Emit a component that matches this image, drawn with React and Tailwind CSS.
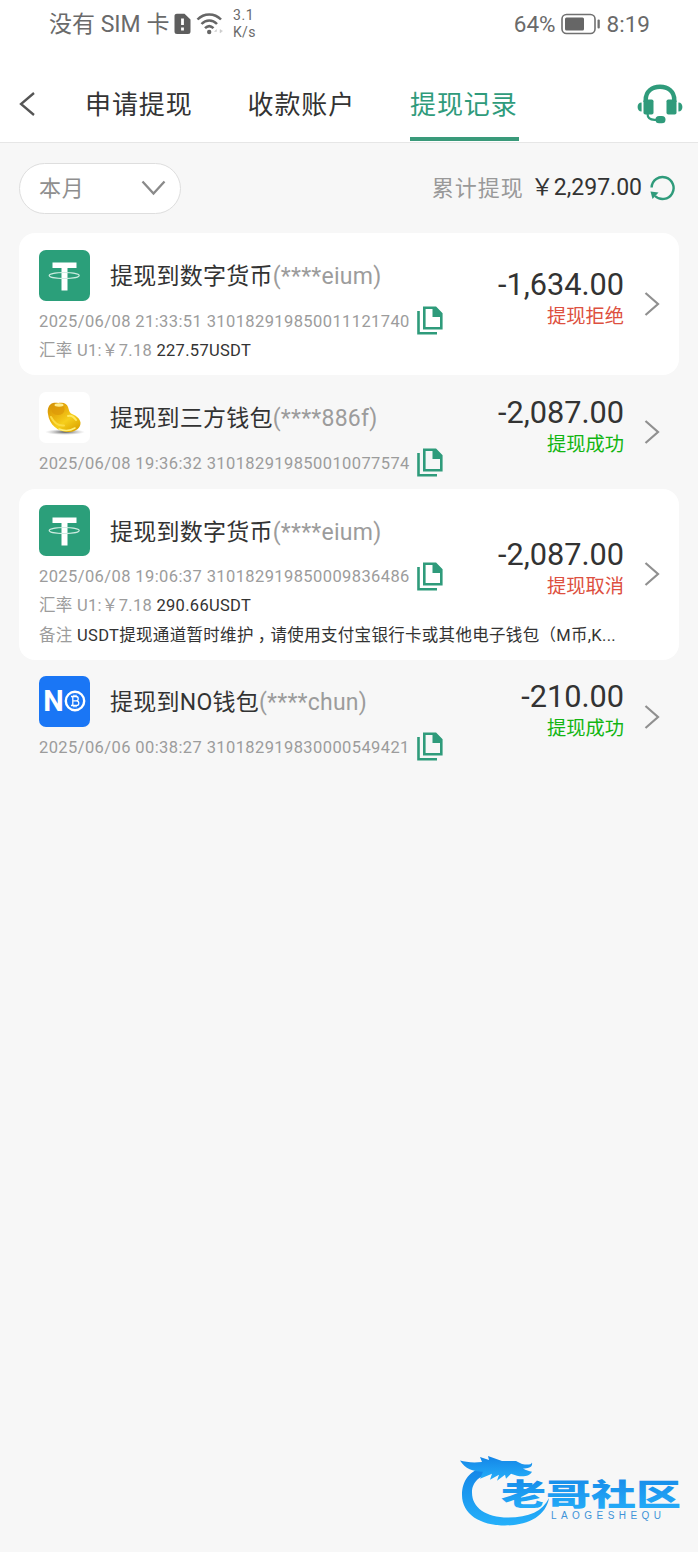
import clsx from "clsx";

const TABS = [
  { key: "apply", label: "申请提现" },
  { key: "account", label: "收款账户" },
  { key: "records", label: "提现记录", active: true },
];

const STATUS = {
  rejected: { label: "提现拒绝", color: "text-[#dd5040]" },
  success: { label: "提现成功", color: "text-[#12b512]" },
  canceled: { label: "提现取消", color: "text-[#dd5040]" },
};

const RECORDS = [
  {
    id: "310182919850011121740",
    icon: "usdt",
    title: "提现到数字货币",
    account: "(****eium)",
    time: "2025/06/08 21:33:51",
    amount: "-1,634.00",
    status: "rejected",
    rate: "227.57USDT",
    height: "h-[142px]",
  },
  {
    id: "310182919850010077574",
    icon: "gold",
    title: "提现到三方钱包",
    account: "(****886f)",
    time: "2025/06/08 19:36:32",
    amount: "-2,087.00",
    status: "success",
    height: "h-[113.700px]",
  },
  {
    id: "310182919850009836486",
    icon: "usdt",
    title: "提现到数字货币",
    account: "(****eium)",
    time: "2025/06/08 19:06:37",
    amount: "-2,087.00",
    status: "canceled",
    rate: "290.66USDT",
    remark: true,
    height: "h-[170.500px]",
  },
  {
    id: "310182919830000549421",
    icon: "no",
    title: "提现到NO钱包",
    account: "(****chun)",
    time: "2025/06/06 00:38:27",
    amount: "-210.00",
    status: "success",
    height: "h-[114px]",
  },
];

function StatusBar() {
  return (
    <div className="flex h-12 items-center justify-between pl-[49px] pr-[48px] text-[#6a6a6a]">
      <div className="flex items-center">
        <span className="w-[125px] whitespace-nowrap pt-px text-[23px] leading-none">没有 SIM 卡</span>
        <svg className="h-[22px] w-[17px]" viewBox="0 0 17 22">
          <path d="M3 .8h7.500l6 5.700v12a2.500 2.500 0 0 1-2.500 2.500H3a2.500 2.500 0 0 1-2.500-2.500v-15A2.500 2.500 0 0 1 3 .8z" fill="#5e5e5e" />
          <path d="M8.500 5.500v6.500M8.500 14.500v3" stroke="#fff" strokeWidth="2.800" />
        </svg>
        <svg className="ml-[5px] h-[24px] w-[28px]" viewBox="0 0 28 24" fill="none" stroke="#666" strokeWidth="2.500">
          <path d="M1.500 7.500C8 .7 18.500 .7 25 7.500" />
          <path d="M5.500 12C10 7.300 16.500 7.300 21 12" />
          <path d="M9 16.200c2.700-2.700 5.800-2.700 8.500 0" />
          <circle cx="13.200" cy="20" r="2.200" fill="#666" stroke="none" />
          <path d="M20.500 17.500l-2 2h2zM24 17.500v3.500l2.500-2z" fill="#ccc" stroke="#ccc" strokeWidth=".5" />
        </svg>
        <div className="ml-[9px] text-[14px] leading-[17.500px]">
          <div className="tracking-[0.6px]">3.1</div>
          <div className="tracking-[0.3px]">K/s</div>
        </div>
      </div>
      <div className="flex items-center text-[22.500px] leading-none">
        <span>64%</span>
        <svg className="ml-[5px] h-[22px] w-[40px]" viewBox="0 0 40 22">
          <rect x="1" y="1.500" width="33" height="19" rx="4.500" fill="none" stroke="#707070" strokeWidth="1.600" />
          <rect x="4" y="4.500" width="19" height="13" rx="1.500" fill="#666" />
          <rect x="36.500" y="6.500" width="2.300" height="9" rx="1" fill="#707070" />
        </svg>
        <span className="ml-[6px]">8:19</span>
      </div>
    </div>
  );
}

function HeadsetIcon() {
  return (
    <svg className="h-[40px] w-[46px]" viewBox="0 0 46 40" fill="#2f9b7b">
      <path d="M8.700 18v-2C8.700 7.200 15 2.800 23 2.800S37.300 7.200 37.300 16v2" fill="none" stroke="#2f9b7b" strokeWidth="4.400" />
      <rect x="6.500" y="15.500" width="10" height="15" rx="1.800" />
      <rect x="29.500" y="15.500" width="10" height="15" rx="1.800" />
      <path d="M4.600 18.500v9C2 27.500.6 25.500.6 23s1.400-4.500 4-4.500zM41.400 18.500v9c2.600 0 4-2 4-4.500s-1.400-4.500-4-4.500z" />
      <path d="M10.500 29.500c0 4.500 2 6.300 7 6.300h3" fill="none" stroke="#2f9b7b" strokeWidth="2.200" />
      <rect x="18.500" y="32" width="10" height="7.300" rx="3.600" />
    </svg>
  );
}

function Header() {
  return (
    <header className="h-[143px] border-b border-[#e6e6e6] bg-white">
      <StatusBar />
      <nav className="flex h-[94px] items-start pl-[18px]">
        <svg className="mt-[43px] h-[26px] w-[18px]" viewBox="0 0 18 26" fill="none" stroke="#555" strokeWidth="2.300">
          <path d="M16 2L3 13l13 11" />
        </svg>
        <div className="ml-[49px] flex gap-[54px]">
          {TABS.map((tab) => (
            <div
              key={tab.key}
              className={clsx(
                "flex h-[93px] w-[108.500px] flex-col justify-between whitespace-nowrap text-[26px] tracking-[0.9px]",
                tab.active ? "text-[#2f9b7b]" : "text-[#333]"
              )}
            >
              <span className="mt-[37px] leading-[40px]">{tab.label}</span>
              {tab.active && <span className="h-[4px] bg-[#3a9a7a]" />}
            </div>
          ))}
        </div>
        <div className="ml-auto mr-[15px] mt-[36px]">
          <HeadsetIcon />
        </div>
      </nav>
    </header>
  );
}

function FilterBar() {
  return (
    <div className="flex h-[90.400px] items-center justify-between pl-[19px] pr-[22px]">
      <button className="flex h-[51px] w-[162px] items-center justify-between rounded-full border border-[#dedede] bg-white pl-[19px] pr-[14px] text-[22px] tracking-[0.8px] text-[#8f8f8f]">
        本月
        <svg className="h-[16px] w-[25px]" viewBox="0 0 25 16" fill="none" stroke="#8a8a8a" strokeWidth="2.300">
          <path d="M1.500 1.500l11 12 11-12" />
        </svg>
      </button>
      <div className="flex items-center text-[22px]">
        <span className="pt-px tracking-[1px] text-[#999]">累计提现</span>
        <span className="ml-[7px] pt-px text-[23px] text-[#333]">￥2,297.00</span>
        <svg className="ml-[7px] h-[27px] w-[27px]" viewBox="0 0 27 27" fill="none" stroke="#2f9b7b" strokeWidth="2.400">
          <path d="M2.600 12.500A11 11 0 1 1 6 21" />
          <path d="M1.500 16.500l8 1-6 6.500z" fill="#2f9b7b" stroke="none" />
        </svg>
      </div>
    </div>
  );
}

function UsdtIcon() {
  return (
    <svg className="h-[51px] w-[51px] shrink-0" viewBox="0 0 51 51">
      <rect width="51" height="51" rx="7" fill="#2b9f7a" />
      <path d="M13.500 12.500h24v5.500h-9v22.500h-6V18h-9z" fill="#fff" />
      <ellipse cx="25.200" cy="25.500" rx="15" ry="3" fill="none" stroke="#cdebe0" strokeWidth="1.200" />
    </svg>
  );
}

function GoldIcon() {
  return (
    <svg className="h-[51px] w-[51px] shrink-0" viewBox="0 0 51 51">
      <defs>
        <linearGradient id="gold" x1="0" y1="0" x2=".8" y2="1">
          <stop offset="0" stopColor="#d08f06" />
          <stop offset=".35" stopColor="#e8ac0c" />
          <stop offset=".65" stopColor="#f6cf1c" />
          <stop offset="1" stopColor="#dca400" />
        </linearGradient>
        <radialGradient id="goldShade">
          <stop offset="0" stopColor="#333" stopOpacity=".85" />
          <stop offset="1" stopColor="#999" stopOpacity="0" />
        </radialGradient>
      </defs>
      <rect width="51" height="51" rx="7" fill="#fff" />
      <ellipse cx="26" cy="40" rx="20" ry="3" fill="url(#goldShade)" />
      <path d="M9 22c-1-5 1-10 5-11 3-.8 4 .3 7-.2 4-.7 7 1 8 4.200 1 3 1 5 3 6.500 4 1.500 9 4.500 9.500 9 .4 5-4 9-11 9.500C20 40.500 10 33 9 22z" fill="url(#gold)" />
      <ellipse cx="19" cy="17.500" rx="6.500" ry="5.500" fill="#dd9808" fillOpacity=".7" />
      <ellipse cx="20" cy="13" rx="4.500" ry="1.700" fill="#ffec8a" />
      <path d="M12 25c3 6 8 9 13 8.500" fill="none" stroke="#fbdc45" strokeWidth="2" strokeLinecap="round" />
      <path d="M29 24c3-1 6 1 8 4" fill="none" stroke="#ffe863" strokeWidth="2" strokeLinecap="round" />
      <path d="M20 37c5 2 11 2 16-1" fill="none" stroke="#fff07a" strokeWidth="1.500" strokeLinecap="round" />
    </svg>
  );
}

function NoIcon() {
  return (
    <div className="flex h-[51px] w-[51px] shrink-0 items-center justify-center rounded-[7px] bg-[#1a76f5] text-white">
      <span className="text-[29px] font-bold leading-none">N</span>
      <svg className="h-[22px] w-[22px] shrink-0" viewBox="0 0 22 22" fill="none" stroke="#fff">
        <circle cx="11" cy="11" r="9.200" strokeWidth="2.400" />
        <path d="M7 6.500h5a2.200 2.200 0 0 1 0 4.400H8.500h4a2.300 2.300 0 0 1 0 4.600H7M8.800 6.500v9M10 4.800v1.700M12 4.800v1.700M10 15.500v1.700M12 15.500v1.700" strokeWidth="1.300" />
      </svg>
    </div>
  );
}

const ICONS = { usdt: UsdtIcon, gold: GoldIcon, no: NoIcon };

function CopyIcon() {
  return (
    <svg className="ml-[7px] h-[29px] w-[26px] shrink-0" viewBox="0 0 26 29" fill="none" stroke="#2f9b7b">
      <path d="M1.500 5v22.200h18.500" strokeWidth="2.600" />
      <path d="M7.300 1.800h11.200l5.800 6v14.500h-17z" strokeWidth="2.600" />
      <path d="M15.500 1.500h3.500l6 6.200V11h-9.500z" fill="#2f9b7b" stroke="none" />
    </svg>
  );
}

function RecordItem({ record, striped }) {
  const Icon = ICONS[record.icon];
  const status = STATUS[record.status];

  return (
    <li className={clsx("flex items-center justify-between rounded-[16px] px-[20px]", record.height, striped && "bg-white")}>
      <div className="h-full w-[410px] shrink-0 whitespace-nowrap pt-[16.300px] text-[16.500px] leading-[29px] text-[#9c9c9c]">
        <div className="flex h-[51px] items-center">
          <Icon />
          <p className="ml-[20px] pt-[3px] text-[23px] tracking-[0.250px]">
            <span className="text-[#333]">{record.title}</span>
            <span>{record.account}</span>
          </p>
        </div>
        <div className="mt-[5.400px] flex h-[29px] items-center">
          <span className="pt-px tracking-[0.4px]">
            {record.time} {record.id}
          </span>
          <CopyIcon />
        </div>
        {record.rate && (
          <p className="h-[29px] pt-[0.500px]">
            <span className="tracking-[0.3px]">汇率 U1:￥7.18 </span>
            <span className="tracking-[0.3px] text-[#333]">{record.rate}</span>
          </p>
        )}
        {record.remark && (
          <p className="h-[29px] pt-px tracking-[0.310px]">
            备注{" "}
            <span className="text-[#333]">
              USDT提现通道暂时维护<span className="-mr-[4px] pl-[4px]">，</span>请使用支付宝银行卡或其他电子钱包（M币,K...
            </span>
          </p>
        )}
      </div>
      <div className="flex items-center">
        <div className="pb-[9px] text-right">
          <p className="pb-px text-[30.700px] leading-[33px] text-[#333]">{record.amount}</p>
          <p className={clsx("text-[19.250px] leading-[30px]", status.color)}>{status.label}</p>
        </div>
        <svg className="ml-[20px] -mr-px h-[26px] w-[16px]" viewBox="0 0 16 26" fill="none" stroke="#909090" strokeWidth="2.200">
          <path d="M1.500 2l12.500 11-12.500 11" />
        </svg>
      </div>
    </li>
  );
}

function CommunityLogo() {
  return (
    <svg className="h-[80px] w-[226px]" viewBox="0 0 226 80">
      <defs>
        <linearGradient id="brand" x1="0" y1="0" x2="0" y2="1">
          <stop offset="0" stopColor="#1484e6" />
          <stop offset="1" stopColor="#25b0fa" />
        </linearGradient>
      </defs>
      <g fill="url(#brand)">
        <path d="M30 14C12 18 5 29 5 43c0 19 18 30.500 43 30.500 23 0 41-9.500 44-27.500-6 13-20 19.500-41 19.500-22 0-36-10-36-25 0-10 7-18 25-21.500z" />
        <path d="M3 8.500c6 1.500 12 2.500 22 1.500l-2-5 9 3-1-4 14 5 14 0 6 3c5 1 9 1 10-1.500 1 5-4 6-9 6 3 2 6 2.500 9 3.200-2 4-8 5.500-15 4l-6-2-5 5-1-4-8 6 2-6-9 5 2-6-12 5 3-7c-10 0-18-3-23-11.200z" />
      </g>
      <text x="44" y="53" textLength="180" lengthAdjust="spacingAndGlyphs" fontSize="30" fontWeight="900" fill="url(#brand)" fontFamily="'Noto Sans CJK SC', sans-serif">
        老哥社区
      </text>
      <text x="94" y="66.500" textLength="110" fontSize="10" fill="#3d93d8" fontFamily="'Liberation Sans', sans-serif">
        LAOGESHEQU
      </text>
    </svg>
  );
}

export default function App() {
  return (
    <div className="flex h-[1552px] w-[698px] flex-col overflow-hidden bg-[#f7f7f7] font-[Roboto,'Noto_Sans_CJK_SC',sans-serif]">
      <Header />
      <FilterBar />
      <ul className="px-[19px]">
        {RECORDS.map((record, index) => (
          <RecordItem key={record.id} record={record} striped={index % 2 === 0} />
        ))}
      </ul>
      <div className="ml-auto mr-[15px] mt-auto pb-[20px]">
        <CommunityLogo />
      </div>
    </div>
  );
}
